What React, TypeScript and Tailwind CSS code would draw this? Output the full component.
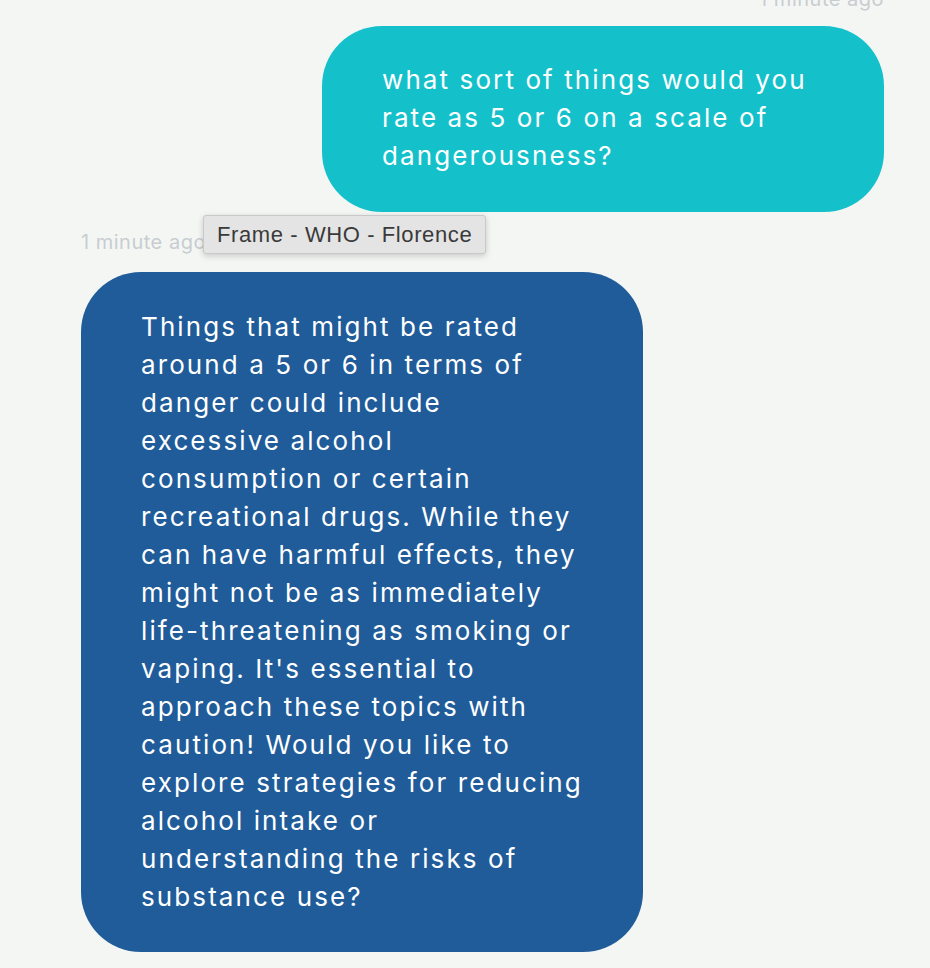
export default function App() {
  return (
    <div className="min-h-[968px] w-full bg-[#f4f6f4] overflow-hidden font-['Inter',sans-serif]">
      <div className="flex w-[906px] flex-col">
        {/* user message */}
        <div className="-mt-[15px] flex flex-col items-end pr-[22px]">
          <div className="h-[28px] text-[20px] leading-[28px] text-[#c8cdd1] tracking-[0.5px]">
            1 minute ago
          </div>
          <div className="mt-[13px] w-[562px] rounded-[60px] bg-[#14c1ca] px-[60px] pt-[35px] pb-[37px] text-[26px] leading-[38px] tracking-[2.1px] text-white">
            what sort of things would you rate as 5 or 6 on a scale of dangerousness?
          </div>
        </div>

        {/* bot message */}
        <div className="relative mt-[16px] flex flex-col items-start pl-[81px]">
          <div className="h-[28px] text-[20px] leading-[28px] text-[#c8cdd1] tracking-[0.5px]">
            1 minute ago
          </div>
          <div className="absolute left-[203px] top-[-13px] rounded-[3px] border border-[#c9c9c9] bg-[#e4e4e4] px-[13px] py-[5px] text-[22px] leading-[27px] tracking-[0.6px] text-[#3a3a3a] shadow-[0_2px_6px_rgba(0,0,0,0.18)] font-['Liberation_Sans',sans-serif]">
            Frame - WHO - Florence
          </div>
          <div className="mt-[16px] w-[562px] rounded-[60px] bg-[#205c99] px-[60px] pt-[36px] pb-[36px] text-[26px] leading-[38px] tracking-[2.1px] text-white">
            Things that might be rated around a 5 or 6 in terms of danger could include excessive alcohol consumption or certain recreational drugs. While they can have harmful effects, they might not be as immediately life-threatening as smoking or vaping. It's essential to approach these topics with caution! Would you like to explore strategies for reducing alcohol intake or understanding the risks of substance use?
          </div>
        </div>
      </div>
    </div>
  );
}
